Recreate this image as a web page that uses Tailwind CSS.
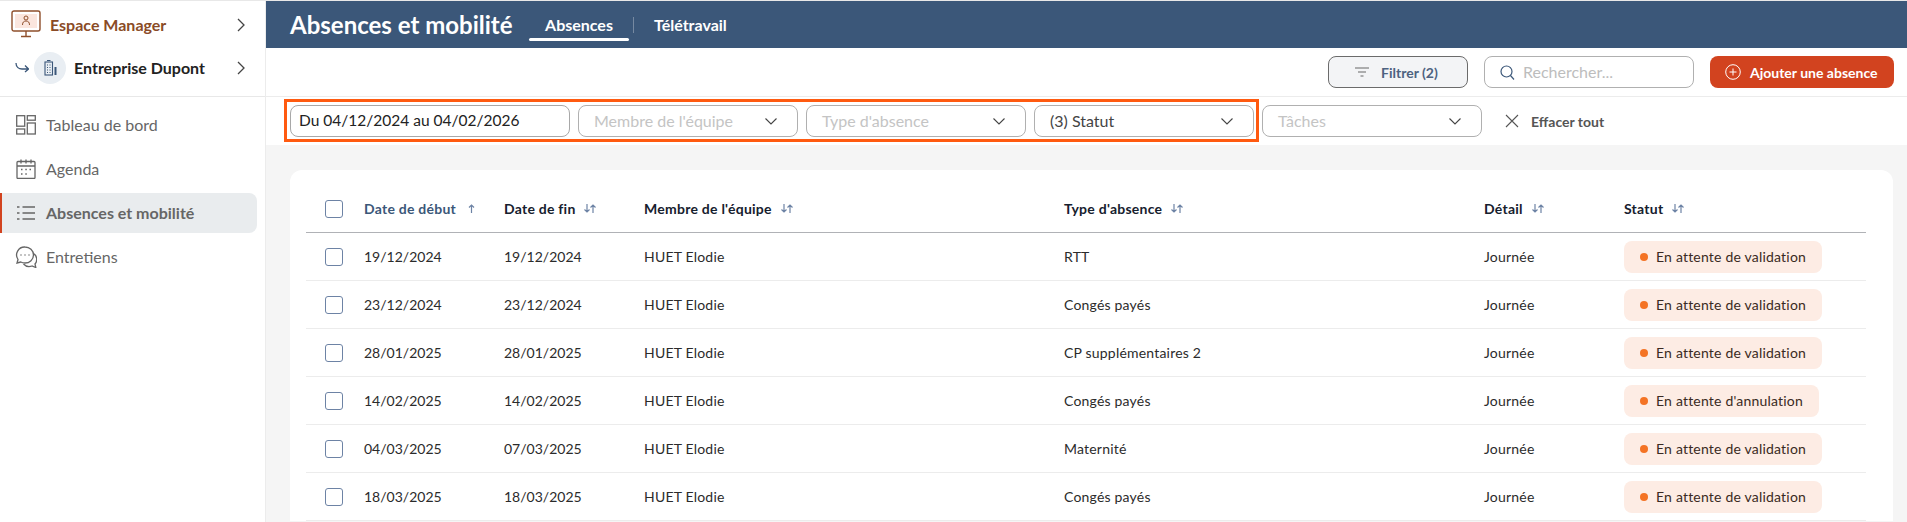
<!DOCTYPE html>
<html lang="fr">
<head>
  <meta charset="UTF-8">
  <meta name="viewport" content="width=device-width, initial-scale=1.0">
  <title>Absences et mobilité</title>
  <script src="https://cdn.jsdelivr.net/npm/@tailwindcss/browser@4"></script>
</head>
<body class="font-['Lato',sans-serif]">
  <div class="relative h-[522px] w-[1907px] overflow-hidden flex border-t border-[#e8e8e8] bg-[#f5f5f5]">

    <!-- sidebar -->
    <aside class="w-[266px] shrink-0 bg-white border-r border-[#ececec] h-full">
      <div class="h-[96px] border-b border-[#e8e8e8]">
        <div class="h-[47px] flex items-center pl-[11px] pr-[20px]">
          <svg class="w-[31px] h-[29px] shrink-0" viewBox="0 0 31 29" fill="none" stroke="#8f4f2b" stroke-width="1.4">
            <rect x="1" y="1" width="28" height="20" rx="2"/>
            <rect x="4" y="4" width="22" height="14" fill="#fbe6de" stroke="none"/>
            <circle cx="15" cy="8" r="2" stroke-width="1"/>
            <path d="M11.5 15c0-3 1.5-4 3.5-4s3.500 1 3.500 4" stroke-width="1"/>
            <path d="M15 21v5M10 26.500h10"/>
          </svg>
          <span class="ml-[8px] text-[16px] font-bold text-[#8a4b26] leading-none">Espace Manager</span>
          <svg class="ml-auto w-[8px] h-[14px]" viewBox="0 0 8 14" fill="none" stroke="#444" stroke-width="1.300"><path d="M1 1l6 6-6 6"/></svg>
        </div>
        <div class="h-[40px] flex items-center pl-[15px] pr-[20px]">
          <svg class="w-[14px] h-[10px] shrink-0" viewBox="0 0 14 10" fill="none" stroke="#3b5779" stroke-width="1.300"><path d="M1 0c0 4 3 6 6 6h6M10 2.500l3.500 3.500L10 9"/></svg>
          <span class="ml-[5px] w-[32px] h-[32px] rounded-full bg-[#e9eef3] flex items-center justify-center shrink-0">
            <svg class="w-[13px] h-[16px]" viewBox="0 0 13 16" fill="none" stroke="#3b5779" stroke-width="1.100">
              <rect x="1" y="2" width="7.500" height="13"/>
              <path d="M3 0.500h3.500M3 5h1M5.500 5h1M3 7.500h1M5.500 7.500h1M3 10h1M5.500 10h1M3 12.500h1M5.500 12.500h1"/>
              <path d="M11.500 7v8" stroke-width="2"/>
            </svg>
          </span>
          <span class="ml-[8px] text-[16px] font-bold text-[#222] leading-none">Entreprise Dupont</span>
          <svg class="ml-auto w-[8px] h-[14px]" viewBox="0 0 8 14" fill="none" stroke="#444" stroke-width="1.300"><path d="M1 1l6 6-6 6"/></svg>
        </div>
      </div>

      <nav class="pt-[8px] text-[16px] text-[#666]">
        <a class="h-[40px] mb-[4px] flex items-center pl-[16px]">
          <svg class="w-[20px] h-[20px] shrink-0" viewBox="0 0 20 20" fill="none" stroke="#666" stroke-width="1.300">
            <rect x="0.700" y="0.700" width="8" height="10.500"/>
            <rect x="11.300" y="0.700" width="8" height="4.500"/>
            <rect x="0.700" y="14" width="8" height="5"/>
            <rect x="11.300" y="8" width="8" height="11"/>
          </svg>
          <span class="ml-[10px]">Tableau de bord</span>
        </a>
        <a class="h-[40px] mb-[4px] flex items-center pl-[16px]">
          <svg class="w-[20px] h-[20px] shrink-0" viewBox="0 0 20 20" fill="none" stroke="#666" stroke-width="1.300">
            <rect x="1" y="2.500" width="18" height="17" rx="1"/>
            <path d="M1 7h18M5 0.500v4M10 0.500v4M15 0.500v4"/>
            <path d="M5 10.500h1.500M9.300 10.500h1.500M13.500 10.500h1.500M5 15h1.500M9.300 15h1.500" stroke-width="1.500"/>
          </svg>
          <span class="ml-[10px]">Agenda</span>
        </a>
        <a class="h-[40px] mb-[4px] w-[257px] flex items-center pl-[14px] bg-[#e9ecee] rounded-r-[8px] border-l-2 border-[#d2431f] font-bold">
          <svg class="w-[20px] h-[16px] shrink-0" viewBox="0 0 20 16" fill="none" stroke="#666" stroke-width="1.300">
            <path d="M1 2h2.500M1 8h2.500M1 14h2.500M6.500 2H19M6.500 8H19M6.500 14H19"/>
          </svg>
          <span class="ml-[10px]">Absences et mobilité</span>
        </a>
        <a class="h-[40px] flex items-center pl-[15px]">
          <svg class="w-[22px] h-[22px] shrink-0" viewBox="0 0 22 22" fill="none" stroke="#666" stroke-width="1.300">
            <path d="M10 1a8.500 8 0 0 1 0 16c-1.500 0-3-.3-4.200-1L2 17l1-3.500A8 8 0 0 1 10 1z"/>
            <path d="M18.500 7.500a7 7 0 0 1 1.500 10.500l.8 3.500-3.800-1.500c-3 1-6.500.2-8.500-2"/>
            <path d="M5.500 9h1M9.500 9h1M13.500 9h1" stroke-width="1.500"/>
          </svg>
          <span class="ml-[9px]">Entretiens</span>
        </a>
      </nav>
    </aside>

    <!-- main -->
    <main class="flex-1 min-w-0">
      <header class="h-[47px] bg-[#3b5779] flex items-center pl-[24px] text-white">
        <h1 class="text-[24px] font-bold leading-none w-[239px]">Absences et mobilité</h1>
        <div class="h-[47px] w-[100px] flex items-center justify-center text-[16px] font-bold relative">
          Absences
          <span class="absolute left-0 right-0 bottom-[7px] h-[3px] rounded-full bg-white"></span>
        </div>
        <span class="ml-[4px] w-px h-[16px] bg-white/30"></span>
        <div class="ml-[20px] text-[16px] font-bold">Télétravail</div>
      </header>

      <div class="h-[49px] bg-white border-b border-[#ececec] flex items-center justify-end pr-[13px] gap-[16px]">
        <button class="w-[140px] h-[32px] rounded-[8px] border border-[#6b6b6b] bg-[#f3f4f6] flex items-center pl-[26px] text-[14px] font-bold text-[#4d6280]">
          <svg class="w-[14px] h-[10px] shrink-0" viewBox="0 0 14 10" fill="none" stroke="#666" stroke-width="1"><path d="M0 1h14M3 5h8M5.500 9h3"/></svg>
          <span class="ml-[12px]">Filtrer (2)</span>
        </button>
        <div class="w-[210px] h-[32px] rounded-[8px] border border-[#b0b0b0] bg-white flex items-center pl-[15px] text-[16px] text-[#bdbdbd]">
          <svg class="w-[15px] h-[15px] shrink-0" viewBox="0 0 15 15" fill="none" stroke="#3b5779" stroke-width="1.200"><circle cx="6.500" cy="6.500" r="5.500"/><path d="M10.500 10.500l3.500 4"/></svg>
          <span class="ml-[8px]">Rechercher...</span>
        </div>
        <button class="w-[184px] h-[32px] rounded-[8px] bg-[#d2431f] flex items-center pl-[15px] text-[14px] font-bold text-white">
          <svg class="w-[16px] h-[16px] shrink-0" viewBox="0 0 16 16" fill="none" stroke="#fff" stroke-width="1"><circle cx="8" cy="8" r="7.300"/><path d="M8 4.500v7M4.500 8h7"/></svg>
          <span class="ml-[9px] whitespace-nowrap">Ajouter une absence</span>
        </button>
      </div>

      <div class="h-[48px] bg-white flex items-center pl-[24px] gap-[8px] text-[16px]">
        <div class="w-[280px] h-[32px] rounded-[8px] border border-[#a8a8a8] flex items-center pl-[8px] text-[15.500px] text-[#222]">Du 04/12/2024 au 04/02/2026</div>
        <div class="w-[220px] h-[32px] rounded-[8px] border border-[#b0b0b0] flex items-center justify-between pl-[15px] pr-[20px] text-[#c4c4c4]">Membre de l'équipe
          <svg class="w-[12px] h-[7px]" viewBox="0 0 12 7" fill="none" stroke="#444" stroke-width="1.100"><path d="M.5.500L6 6 11.500.500"/></svg>
        </div>
        <div class="w-[220px] h-[32px] rounded-[8px] border border-[#b0b0b0] flex items-center justify-between pl-[15px] pr-[20px] text-[#c4c4c4]">Type d'absence
          <svg class="w-[12px] h-[7px]" viewBox="0 0 12 7" fill="none" stroke="#444" stroke-width="1.100"><path d="M.5.500L6 6 11.500.500"/></svg>
        </div>
        <div class="w-[220px] h-[32px] rounded-[8px] border border-[#b0b0b0] flex items-center justify-between pl-[15px] pr-[20px] text-[#444]">(3) Statut
          <svg class="w-[12px] h-[7px]" viewBox="0 0 12 7" fill="none" stroke="#444" stroke-width="1.100"><path d="M.5.500L6 6 11.500.500"/></svg>
        </div>
        <div class="w-[220px] h-[32px] rounded-[8px] border border-[#b0b0b0] flex items-center justify-between pl-[15px] pr-[20px] text-[#c4c4c4]">Tâches
          <svg class="w-[12px] h-[7px]" viewBox="0 0 12 7" fill="none" stroke="#444" stroke-width="1.100"><path d="M.5.500L6 6 11.500.500"/></svg>
        </div>
        <div class="ml-[15px] flex items-center text-[14px] font-bold text-[#555]">
          <svg class="w-[14px] h-[14px]" viewBox="0 0 14 14" fill="none" stroke="#555" stroke-width="1.100"><path d="M1 1l12 12M13 1L1 13"/></svg>
          <span class="ml-[12px]">Effacer tout</span>
        </div>
      </div>

      <!-- table card -->
      <div class="mt-[25px] ml-[24px] w-[1603px] bg-white rounded-t-[12px] pl-[16px] pr-[27px] pt-[15px]">
        <div class="grid grid-cols-[58px_140px_140px_420px_420px_140px_1fr] h-[48px] items-center border-b border-[#b0b2b6] text-[14px] font-bold tracking-[.25px] text-[#16202e]">
          <span class="ml-[19px] w-[18px] h-[18px] rounded-[3px] border border-[#6d83a5]"></span>
          <span class="flex items-center text-[#3b5779]">Date de début<svg class="ml-[12px] w-[7px] h-[9px]" viewBox="0 0 7 9" fill="none" stroke="#6d83a5" stroke-width="1.200"><path d="M3.500 9V1M1 3.500L3.500 1 6 3.500"/></svg></span>
          <span class="flex items-center">Date de fin<svg class="ml-[8px] w-[12px] h-[9px]" viewBox="0 0 12 9" fill="none" stroke="#6d83a5" stroke-width="1.200"><path d="M3 0v8M.5 5.500L3 8l2.500-2.500M9 9V1M6.500 3.500L9 1l2.500 2.500"/></svg></span>
          <span class="flex items-center">Membre de l'équipe<svg class="ml-[9px] w-[12px] h-[9px]" viewBox="0 0 12 9" fill="none" stroke="#6d83a5" stroke-width="1.200"><path d="M3 0v8M.5 5.500L3 8l2.500-2.500M9 9V1M6.500 3.500L9 1l2.500 2.500"/></svg></span>
          <span class="flex items-center">Type d'absence<svg class="ml-[9px] w-[12px] h-[9px]" viewBox="0 0 12 9" fill="none" stroke="#6d83a5" stroke-width="1.200"><path d="M3 0v8M.5 5.500L3 8l2.500-2.500M9 9V1M6.500 3.500L9 1l2.500 2.500"/></svg></span>
          <span class="flex items-center">Détail<svg class="ml-[9px] w-[12px] h-[9px]" viewBox="0 0 12 9" fill="none" stroke="#6d83a5" stroke-width="1.200"><path d="M3 0v8M.5 5.500L3 8l2.500-2.500M9 9V1M6.500 3.500L9 1l2.500 2.500"/></svg></span>
          <span class="flex items-center">Statut<svg class="ml-[9px] w-[12px] h-[9px]" viewBox="0 0 12 9" fill="none" stroke="#6d83a5" stroke-width="1.200"><path d="M3 0v8M.5 5.500L3 8l2.500-2.500M9 9V1M6.500 3.500L9 1l2.500 2.500"/></svg></span>
        </div>

        <div class="grid grid-cols-[58px_140px_140px_420px_420px_140px_1fr] h-[48px] items-center border-b border-[#ececec] text-[14px] text-[#2b2b2b]">
          <span class="ml-[19px] w-[18px] h-[18px] rounded-[3px] border border-[#6d83a5]"></span>
          <span>19/12/2024</span><span>19/12/2024</span><span class="tracking-[.2px]">HUET Elodie</span><span class="tracking-[.2px]">RTT</span><span class="tracking-[.2px]">Journée</span>
          <span class="justify-self-start h-[32px] rounded-[8px] bg-[#fdece4] flex items-center pl-[16px] pr-[16px] tracking-[.2px] text-[#3a2a22]"><i class="w-[8px] h-[8px] rounded-full bg-[#f47324] mr-[8px]"></i>En attente de validation</span>
        </div>
        <div class="grid grid-cols-[58px_140px_140px_420px_420px_140px_1fr] h-[48px] items-center border-b border-[#ececec] text-[14px] text-[#2b2b2b]">
          <span class="ml-[19px] w-[18px] h-[18px] rounded-[3px] border border-[#6d83a5]"></span>
          <span>23/12/2024</span><span>23/12/2024</span><span class="tracking-[.2px]">HUET Elodie</span><span class="tracking-[.2px]">Congés payés</span><span class="tracking-[.2px]">Journée</span>
          <span class="justify-self-start h-[32px] rounded-[8px] bg-[#fdece4] flex items-center pl-[16px] pr-[16px] tracking-[.2px] text-[#3a2a22]"><i class="w-[8px] h-[8px] rounded-full bg-[#f47324] mr-[8px]"></i>En attente de validation</span>
        </div>
        <div class="grid grid-cols-[58px_140px_140px_420px_420px_140px_1fr] h-[48px] items-center border-b border-[#ececec] text-[14px] text-[#2b2b2b]">
          <span class="ml-[19px] w-[18px] h-[18px] rounded-[3px] border border-[#6d83a5]"></span>
          <span>28/01/2025</span><span>28/01/2025</span><span class="tracking-[.2px]">HUET Elodie</span><span class="tracking-[.2px]">CP supplémentaires 2</span><span class="tracking-[.2px]">Journée</span>
          <span class="justify-self-start h-[32px] rounded-[8px] bg-[#fdece4] flex items-center pl-[16px] pr-[16px] tracking-[.2px] text-[#3a2a22]"><i class="w-[8px] h-[8px] rounded-full bg-[#f47324] mr-[8px]"></i>En attente de validation</span>
        </div>
        <div class="grid grid-cols-[58px_140px_140px_420px_420px_140px_1fr] h-[48px] items-center border-b border-[#ececec] text-[14px] text-[#2b2b2b]">
          <span class="ml-[19px] w-[18px] h-[18px] rounded-[3px] border border-[#6d83a5]"></span>
          <span>14/02/2025</span><span>14/02/2025</span><span class="tracking-[.2px]">HUET Elodie</span><span class="tracking-[.2px]">Congés payés</span><span class="tracking-[.2px]">Journée</span>
          <span class="justify-self-start h-[32px] rounded-[8px] bg-[#fdece4] flex items-center pl-[16px] pr-[16px] tracking-[.2px] text-[#3a2a22]"><i class="w-[8px] h-[8px] rounded-full bg-[#f47324] mr-[8px]"></i>En attente d'annulation</span>
        </div>
        <div class="grid grid-cols-[58px_140px_140px_420px_420px_140px_1fr] h-[48px] items-center border-b border-[#ececec] text-[14px] text-[#2b2b2b]">
          <span class="ml-[19px] w-[18px] h-[18px] rounded-[3px] border border-[#6d83a5]"></span>
          <span>04/03/2025</span><span>07/03/2025</span><span class="tracking-[.2px]">HUET Elodie</span><span class="tracking-[.2px]">Maternité</span><span class="tracking-[.2px]">Journée</span>
          <span class="justify-self-start h-[32px] rounded-[8px] bg-[#fdece4] flex items-center pl-[16px] pr-[16px] tracking-[.2px] text-[#3a2a22]"><i class="w-[8px] h-[8px] rounded-full bg-[#f47324] mr-[8px]"></i>En attente de validation</span>
        </div>
        <div class="grid grid-cols-[58px_140px_140px_420px_420px_140px_1fr] h-[48px] items-center border-b border-[#ececec] text-[14px] text-[#2b2b2b]">
          <span class="ml-[19px] w-[18px] h-[18px] rounded-[3px] border border-[#6d83a5]"></span>
          <span>18/03/2025</span><span>18/03/2025</span><span class="tracking-[.2px]">HUET Elodie</span><span class="tracking-[.2px]">Congés payés</span><span class="tracking-[.2px]">Journée</span>
          <span class="justify-self-start h-[32px] rounded-[8px] bg-[#fdece4] flex items-center pl-[16px] pr-[16px] tracking-[.2px] text-[#3a2a22]"><i class="w-[8px] h-[8px] rounded-full bg-[#f47324] mr-[8px]"></i>En attente de validation</span>
        </div>
      </div>
    </main>

    <!-- orange annotation box drawn over the filters -->
    <div class="absolute left-[284px] top-[98px] w-[975px] h-[43px] border-[3px] border-[#ff5a10] pointer-events-none"></div>
  </div>
</body>
</html>
